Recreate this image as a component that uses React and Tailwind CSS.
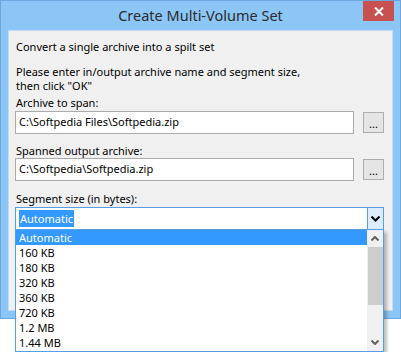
import React from "react";

const font = { fontFamily: '"Noto Sans", "Open Sans", sans-serif' };

function Field({ value }) {
  return (
    <div className="flex items-center">
      <div className="w-[339px] h-[23px] border border-[#ababab] bg-white flex items-center pl-[3px] text-[11px] text-black">
        {value}
      </div>
      <div className="ml-[9px] w-[21px] h-[21px] border border-[#adadad] bg-[#e5e5e5] flex items-end justify-center pb-[3px] text-[11px] leading-[10px] text-black">
        ...
      </div>
    </div>
  );
}

const items = ["Automatic", "160 KB", "180 KB", "320 KB", "360 KB", "720 KB", "1.2 MB", "1.44 MB"];

export default function App() {
  return (
    <div className="relative w-[401px] h-[352px] bg-white overflow-hidden" style={font}>
      <div className="w-[401px] h-[319px] bg-[#8cc6f6] border border-[#6aa7de] flex flex-col">
        <div className="relative h-[29px] flex items-center justify-center">
          <span className="text-[14.5px] text-[#2b2b2b] mt-[1px]">Create Multi-Volume Set</span>
          <div className="absolute right-[6px] top-0 w-[31px] h-[20px] bg-[#c75050] flex items-center justify-center">
            <svg width="10" height="9" viewBox="0 0 10 9">
              <path d="M1 0.5 L9 8.5 M9 0.5 L1 8.5" stroke="white" strokeWidth="2" />
            </svg>
          </div>
        </div>
        <div className="ml-[7px] w-[385px] h-[281px] bg-[#f0f0f0] border border-[#c5dcf0] pl-[6px] text-[11px] text-black flex flex-col">
          <div className="mt-[8px] ml-[1px] h-[15px] leading-[15px]">Convert a single archive into a spilt set</div>
          <div className="mt-[11px] ml-[1px] leading-[14px]">
            <div>Please enter in/output archive name and segment size,</div>
            <div>then click "OK"</div>
          </div>
          <div className="mt-[2px] ml-[1px] h-[15px] leading-[15px]">Archive to span:</div>
          <div className="mt-[1px]">
            <Field value="C:\Softpedia Files\Softpedia.zip" />
          </div>
          <div className="mt-[10px] ml-[1px] h-[14px] leading-[14px]">Spanned output archive:</div>
          <div>
            <Field value="C:\Softpedia\Softpedia.zip" />
          </div>
          <div className="mt-[10px] ml-[1px] h-[15px] leading-[15px]">Segment size (in bytes):</div>
          <div className="mt-[1px] w-[369px] h-[23px] border border-[#569de5] bg-white flex">
            <div className="flex-1 flex items-center pl-[3px]">
              <span className="bg-[#3399ff] text-white px-[1px] leading-[17px]">Automatic</span>
            </div>
            <div className="w-[16px] h-full bg-[#dcecfc] border-l border-[#569de5] flex items-center justify-center">
              <svg width="9" height="6" viewBox="0 0 9 6">
                <path d="M0.5 0.5 L4.5 4.5 L8.5 0.5" stroke="black" strokeWidth="2" fill="none" />
              </svg>
            </div>
          </div>
        </div>
      </div>

      <div className="absolute left-[15px] top-[229px] w-[369px] h-[123px] border border-[#569de5] bg-white flex shadow-[3px_3px_3px_rgba(0,0,0,0.25)] text-[11px] text-black">
        <div className="flex-1 flex flex-col">
          {items.map((it, i) => (
            <div
              key={it}
              className={
                i === 0
                  ? "h-[15px] leading-[15px] pl-[3px] bg-[#3399ff] text-white"
                  : "h-[15px] leading-[15px] pl-[3px]"
              }
            >
              {it}
            </div>
          ))}
        </div>
        <div className="w-[16px] h-full bg-[#f0f0f0] flex flex-col items-center">
          <div className="h-[17px] flex items-center justify-center">
            <svg width="8" height="5" viewBox="0 0 8 5">
              <path d="M0.5 4.5 L4 1 L7.5 4.5" stroke="#606060" strokeWidth="2" fill="none" />
            </svg>
          </div>
          <div className="w-[15px] h-[58px] bg-[#cdcdcd]" />
          <div className="flex-1" />
          <div className="h-[17px] flex items-center justify-center">
            <svg width="8" height="5" viewBox="0 0 8 5">
              <path d="M0.5 0.5 L4 4 L7.5 0.5" stroke="#606060" strokeWidth="2" fill="none" />
            </svg>
          </div>
        </div>
      </div>
    </div>
  );
}
